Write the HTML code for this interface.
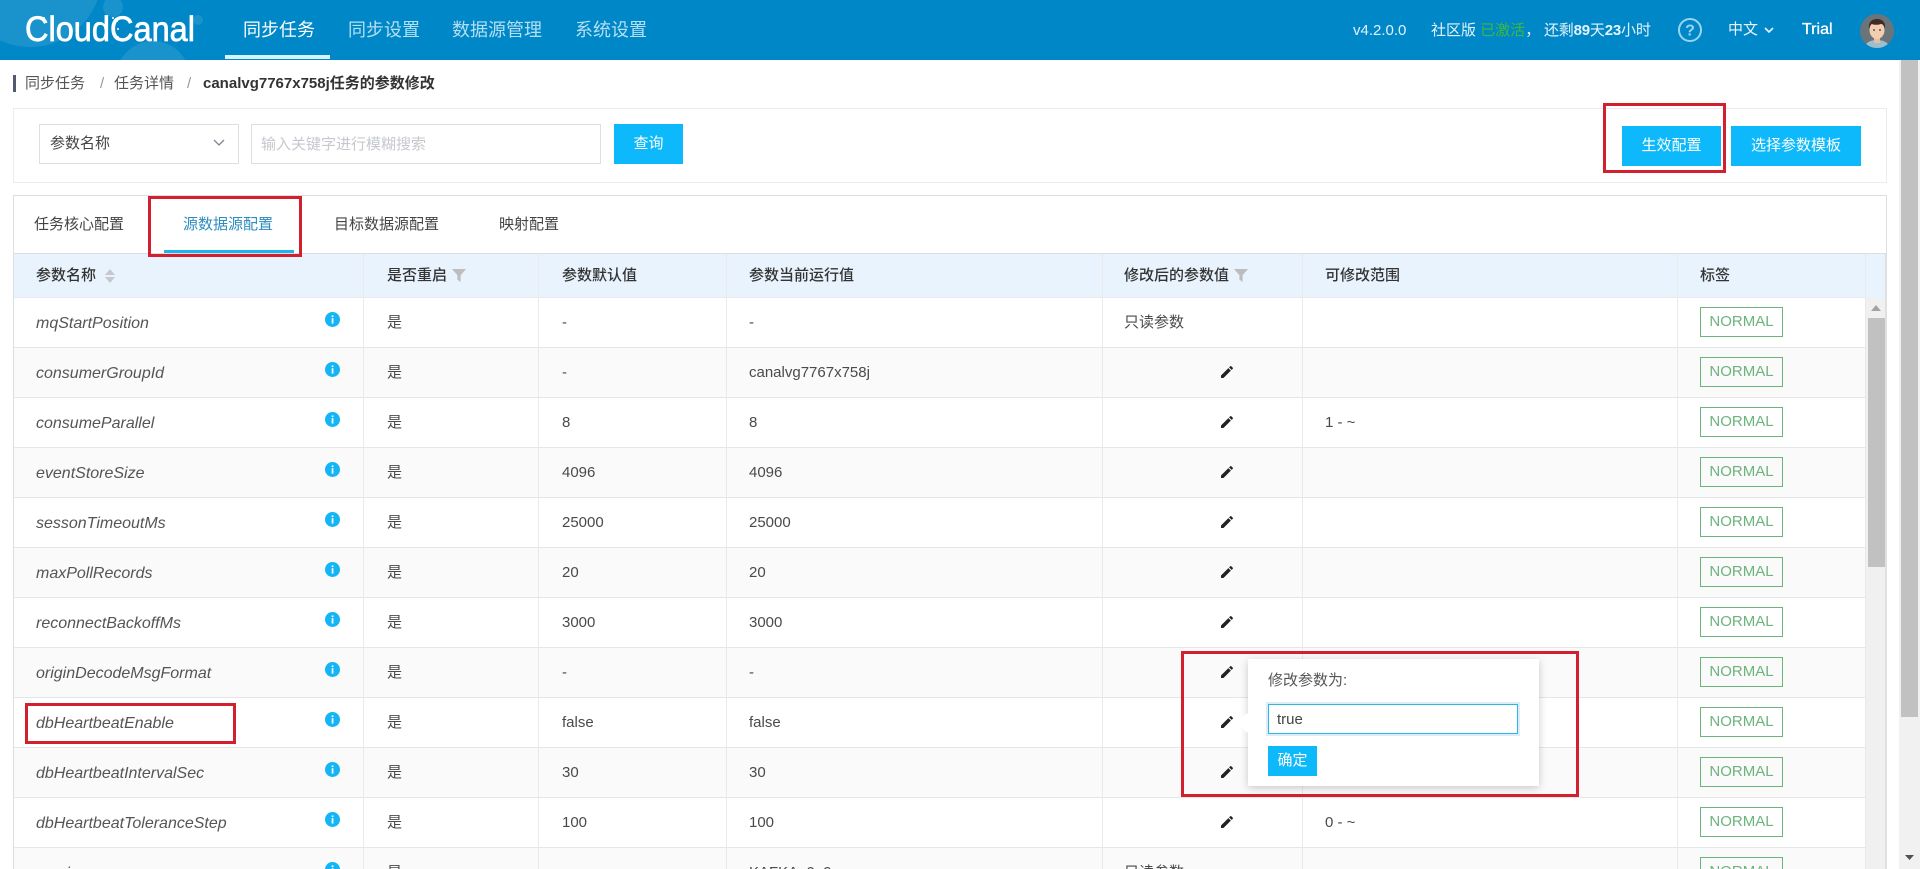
<!DOCTYPE html>
<html lang="zh">
<head>
<meta charset="utf-8">
<title>CloudCanal</title>
<style>
*{box-sizing:border-box}
html,body{margin:0;padding:0;width:1920px;height:869px;overflow:hidden;background:#fff}
body{position:relative;font:15px/1.2 "Liberation Sans","Noto Sans CJK SC",sans-serif;color:#444}
.a{position:absolute;white-space:nowrap}
#hd{position:absolute;left:0;top:0;width:1920px;height:60px;background:#0087c7;overflow:hidden;z-index:5}
.nav{position:absolute;top:18px;font-size:18px;line-height:24px;color:#b5dff3}
.btn{position:absolute;background:#0db9fb;color:#fff;text-align:center;font-size:15px}
.box{position:absolute;border:3px solid #d2202e;z-index:20;pointer-events:none}
#card{position:absolute;left:13px;top:195px;width:1874px;height:690px;border:1px solid #dcdee2;border-bottom:0;background:#fff}
table{position:absolute;left:14px;top:254px;border-collapse:separate;border-spacing:0;table-layout:fixed;width:1852px;z-index:2}
th{height:44px;background:#e8f3fd;border-right:1px solid #e8eaec;border-bottom:1px solid #e8eaec;font-weight:500;text-align:left;color:#333;padding:0 0 0 22px;font-size:15px;position:relative}
td{height:50px;border-right:1px solid #e8eaec;border-bottom:1px solid #e6e6e6;padding:0 0 0 22px;font-size:15px;color:#4a4a4a;position:relative;background:#fff}
td:last-child{padding-top:0;padding-bottom:1px}
tr:nth-child(even) td{background:#fafafa}
td.n{font-style:italic;font-size:16px;color:#555;padding-top:2px}
td.p{padding:0}
.i{position:absolute;left:311px;top:14px;width:15px;height:15px}
.pen{position:absolute;left:116px;top:16px;width:16px;height:16px}
.tag{display:block;width:83px;height:30px;border:1px solid #6cb37c;color:#6cb37c;text-align:center;line-height:28px;font-size:15px}
</style>
</head>
<body>
<svg width="0" height="0" style="position:absolute">
<symbol id="info" viewBox="0 0 15 15"><circle cx="7.5" cy="7.5" r="7.5" fill="#13b5f5"/><rect x="6.7" y="6.2" width="1.7" height="5.4" fill="#fff"/><rect x="6.7" y="3.4" width="1.7" height="1.7" fill="#fff"/></symbol>
<symbol id="pen" viewBox="0 0 24 24"><path fill="#222" d="M3 17.25V21h3.75L17.81 9.94l-3.75-3.75L3 17.25zM20.71 7.04c.39-.39.39-1.02 0-1.41l-2.34-2.34c-.39-.39-1.02-.39-1.41 0l-1.83 1.83 3.75 3.75 1.83-1.83z"/></symbol>
<symbol id="flt" viewBox="0 0 14 13"><path fill="#bdbdbd" d="M0 0h14L8.6 6.2V13L5.4 10.6V6.2z"/></symbol>
</svg>

<div id="hd">
  <svg class="a" style="left:0;top:0" width="240" height="60">
    <circle cx="30" cy="-25" r="72" fill="#1a93cd"/>
    <circle cx="113" cy="7" r="10" fill="#1a93cd"/>
    <circle cx="153" cy="78" r="37" fill="#1a93cd"/>
    <circle cx="198" cy="20" r="5" fill="#1a93cd"/>
    <text x="25" y="41" font-family="Liberation Sans" font-size="35" fill="#fff" stroke="#fff" stroke-width=".7" textLength="170" lengthAdjust="spacingAndGlyphs">CloudCanal</text>
    <g fill="#fff"><circle cx="113" cy="18" r="1"/><circle cx="117" cy="21" r="1"/><circle cx="114" cy="25" r="1"/><circle cx="118" cy="29" r="1"/><circle cx="114" cy="33" r="1"/><circle cx="118" cy="37" r="1"/><circle cx="44" cy="18" r="1"/><circle cx="42" cy="39" r="1"/></g>
  </svg>
  <div class="nav" style="left:243px;color:#fff">同步任务</div>
  <div class="a" style="left:225px;top:55px;width:105px;height:4px;background:#d8f4fb"></div>
  <div class="nav" style="left:348px">同步设置</div>
  <div class="nav" style="left:452px">数据源管理</div>
  <div class="nav" style="left:575px">系统设置</div>

  <div class="a" style="left:1353px;top:22px;color:#e3f3fb;line-height:18px">v4.2.0.0</div>
  <div class="a" style="left:1431px;top:22px;color:#e3f3fb;line-height:18px">社区版 <span style="color:#3cba3c">已激活</span>，</div>
  <div class="a" style="left:1544px;top:22px;color:#e3f3fb;line-height:18px;letter-spacing:-.2px">还剩<b>89</b>天<b>23</b>小时</div>
  <svg class="a" style="left:1678px;top:18px" width="24" height="24" viewBox="0 0 24 24"><circle cx="12" cy="12" r="11" fill="none" stroke="#9ad5f0" stroke-width="2"/><text x="12" y="17.5" text-anchor="middle" font-family="Liberation Sans" font-size="16" font-weight="bold" fill="#9ad5f0">?</text></svg>
  <div class="a" style="left:1728px;top:21px;color:#eaf6fc;line-height:18px">中文</div>
  <svg class="a" style="left:1764px;top:27px" width="10" height="7"><path d="M1 1l4 4 4-4" fill="none" stroke="#eaf6fc" stroke-width="1.6"/></svg>
  <div class="a" style="left:1802px;top:20px;color:#fff;font-size:16px;line-height:20px;-webkit-text-stroke:.3px #fff">Trial</div>
  <svg class="a" style="left:1860px;top:14px" width="34" height="34" viewBox="0 0 34 34">
    <defs><clipPath id="av"><circle cx="17" cy="17" r="17"/></clipPath></defs>
    <g clip-path="url(#av)"><rect width="34" height="34" fill="#6b7579"/>
    <ellipse cx="17" cy="33" rx="12" ry="7" fill="#9cbfd0"/>
    <rect x="14" y="22" width="6" height="7" fill="#e9bd9d"/>
    <ellipse cx="17" cy="16" rx="7.5" ry="9" fill="#f3cdb0"/>
    <path d="M9 15c-1-8 4-10 8-10s9 2 8 10c-1-3-2-5-4-5-3 1-7 1-9 0-2 1-2 3-3 5z" fill="#3e2c27"/>
    <circle cx="14" cy="16" r=".9" fill="#333"/><circle cx="20" cy="16" r=".9" fill="#333"/>
    </g>
  </svg>
</div>

<div class="a" style="left:13px;top:75px;width:3px;height:17px;background:#535a6f"></div>
<div class="a" style="left:25px;top:75px;line-height:18px;color:#555">同步任务</div>
<div class="a" style="left:100px;top:75px;line-height:18px;color:#999">/</div>
<div class="a" style="left:114px;top:75px;line-height:18px;color:#555">任务详情</div>
<div class="a" style="left:187px;top:75px;line-height:18px;color:#999">/</div>
<div class="a" style="left:203px;top:75px;line-height:18px;color:#333;font-weight:bold">canalvg7767x758j任务的参数修改</div>

<div class="a" style="left:13px;top:108px;width:1874px;height:75px;border:1px solid #ececec"></div>
<div class="a" style="left:39px;top:124px;width:200px;height:40px;border:1px solid #dcdee2;padding-left:10px;line-height:38px">参数名称</div>
<svg class="a" style="left:213px;top:139px" width="12" height="8"><path d="M1 1l5 5 5-5" fill="none" stroke="#80848f" stroke-width="1.3"/></svg>
<div class="a" style="left:251px;top:124px;width:350px;height:40px;border:1px solid #dcdee2;padding-left:9px;line-height:39px;color:#c5c8ce">输入关键字进行模糊搜索</div>
<div class="btn" style="left:614px;top:124px;width:69px;height:40px;line-height:40px">查询</div>
<div class="btn" style="left:1622px;top:126px;width:99px;height:40px;line-height:39px">生效配置</div>
<div class="btn" style="left:1731px;top:126px;width:130px;height:40px;line-height:39px">选择参数模板</div>

<div id="card"></div>
<div class="a" style="left:34px;top:216px;line-height:18px;color:#444">任务核心配置</div>
<div class="a" style="left:183px;top:216px;line-height:18px;color:#2d8cc0">源数据源配置</div>
<div class="a" style="left:164px;top:250px;width:130px;height:3px;background:#1db5ec;z-index:3"></div>
<div class="a" style="left:334px;top:216px;line-height:18px;color:#444">目标数据源配置</div>
<div class="a" style="left:499px;top:216px;line-height:18px;color:#444">映射配置</div>
<div class="a" style="left:14px;top:253px;width:1872px;height:1px;background:#dcdee2;z-index:3"></div>
<div class="a" style="left:1866px;top:254px;width:20px;height:44px;background:#e8f3fd"></div>

<table>
<colgroup><col style="width:350px"><col style="width:175px"><col style="width:188px"><col style="width:376px"><col style="width:200px"><col style="width:375px"><col style="width:188px"></colgroup>
<thead><tr>
<th>参数名称<svg style="position:absolute;left:90px;top:15px" width="12" height="14"><path d="M6 0l5 6H1zM6 14l5-6H1z" fill="#c5c8ce"/></svg></th>
<th style="padding-left:23px">是否重启<svg style="position:absolute;left:88px;top:15px" width="14" height="13"><use href="#flt"/></svg></th>
<th style="padding-left:23px">参数默认值</th>
<th>参数当前运行值</th>
<th style="padding-left:21px">修改后的参数值<svg style="position:absolute;left:131px;top:15px" width="14" height="13"><use href="#flt"/></svg></th>
<th>可修改范围</th>
<th>标签</th>
</tr></thead>
<tbody>
<tr><td class="n">mqStartPosition<svg class="i"><use href="#info"/></svg></td><td style="padding-left:23px">是</td><td style="padding-left:23px">-</td><td>-</td><td style="padding-left:21px">只读参数</td><td></td><td><span class="tag">NORMAL</span></td></tr>
<tr><td class="n">consumerGroupId<svg class="i"><use href="#info"/></svg></td><td style="padding-left:23px">是</td><td style="padding-left:23px">-</td><td>canalvg7767x758j</td><td class="p"><svg class="pen"><use href="#pen"/></svg></td><td></td><td><span class="tag">NORMAL</span></td></tr>
<tr><td class="n">consumeParallel<svg class="i"><use href="#info"/></svg></td><td style="padding-left:23px">是</td><td style="padding-left:23px">8</td><td>8</td><td class="p"><svg class="pen"><use href="#pen"/></svg></td><td>1 - ~</td><td><span class="tag">NORMAL</span></td></tr>
<tr><td class="n">eventStoreSize<svg class="i"><use href="#info"/></svg></td><td style="padding-left:23px">是</td><td style="padding-left:23px">4096</td><td>4096</td><td class="p"><svg class="pen"><use href="#pen"/></svg></td><td></td><td><span class="tag">NORMAL</span></td></tr>
<tr><td class="n">sessonTimeoutMs<svg class="i"><use href="#info"/></svg></td><td style="padding-left:23px">是</td><td style="padding-left:23px">25000</td><td>25000</td><td class="p"><svg class="pen"><use href="#pen"/></svg></td><td></td><td><span class="tag">NORMAL</span></td></tr>
<tr><td class="n">maxPollRecords<svg class="i"><use href="#info"/></svg></td><td style="padding-left:23px">是</td><td style="padding-left:23px">20</td><td>20</td><td class="p"><svg class="pen"><use href="#pen"/></svg></td><td></td><td><span class="tag">NORMAL</span></td></tr>
<tr><td class="n">reconnectBackoffMs<svg class="i"><use href="#info"/></svg></td><td style="padding-left:23px">是</td><td style="padding-left:23px">3000</td><td>3000</td><td class="p"><svg class="pen"><use href="#pen"/></svg></td><td></td><td><span class="tag">NORMAL</span></td></tr>
<tr><td class="n">originDecodeMsgFormat<svg class="i"><use href="#info"/></svg></td><td style="padding-left:23px">是</td><td style="padding-left:23px">-</td><td>-</td><td class="p"><svg class="pen"><use href="#pen"/></svg></td><td></td><td><span class="tag">NORMAL</span></td></tr>
<tr><td class="n">dbHeartbeatEnable<svg class="i"><use href="#info"/></svg></td><td style="padding-left:23px">是</td><td style="padding-left:23px">false</td><td>false</td><td class="p"><svg class="pen"><use href="#pen"/></svg></td><td></td><td><span class="tag">NORMAL</span></td></tr>
<tr><td class="n">dbHeartbeatIntervalSec<svg class="i"><use href="#info"/></svg></td><td style="padding-left:23px">是</td><td style="padding-left:23px">30</td><td>30</td><td class="p"><svg class="pen"><use href="#pen"/></svg></td><td></td><td><span class="tag">NORMAL</span></td></tr>
<tr><td class="n">dbHeartbeatToleranceStep<svg class="i"><use href="#info"/></svg></td><td style="padding-left:23px">是</td><td style="padding-left:23px">100</td><td>100</td><td class="p"><svg class="pen"><use href="#pen"/></svg></td><td>0 - ~</td><td><span class="tag">NORMAL</span></td></tr>
<tr><td class="n">version<svg class="i"><use href="#info"/></svg></td><td style="padding-left:23px">是</td><td style="padding-left:23px"></td><td>KAFKA_0_9</td><td style="padding-left:21px">只读参数</td><td></td><td><span class="tag">NORMAL</span></td></tr>
</tbody>
</table>

<div class="a" style="left:1866px;top:298px;width:19px;height:571px;background:#f0f0f0;z-index:3"></div>
<div class="a" style="left:1868px;top:318px;width:17px;height:249px;background:#c1c1c1;z-index:3"></div>
<svg class="a" style="left:1871px;top:305px;z-index:3" width="10" height="6"><path d="M5 0l5 6H0z" fill="#a3a3a3"/></svg>
<div class="a" style="left:1885px;top:254px;width:2px;height:615px;background:#dfe0e3;z-index:3"></div>

<div class="a" style="left:1899px;top:60px;width:21px;height:809px;background:#f1f1f1"></div>
<div class="a" style="left:1901px;top:60px;width:17px;height:657px;background:#c1c1c1"></div>
<svg class="a" style="left:1905px;top:855px" width="9" height="5"><path d="M0 0h9L4.5 5z" fill="#505050"/></svg>

<div class="a" style="left:1248px;top:659px;width:291px;height:127px;background:#fff;box-shadow:0 2px 8px rgba(0,0,0,.2);z-index:10">
  <div class="a" style="left:20px;top:13px;line-height:18px;color:#555">修改参数为:</div>
  <div class="a" style="left:20px;top:45px;width:250px;height:30px;border:1px solid #2db7e8;box-shadow:0 0 0 2px #dcedf8;padding-left:8px;line-height:29px;font-size:15px;color:#444">true</div>
  <div class="btn" style="left:20px;top:87px;width:49px;height:30px;line-height:30px">确定</div>
</div>
<div class="a" style="left:1240px;top:716px;width:14px;height:14px;background:#fff;transform:rotate(45deg);z-index:11"></div>

<div class="box" style="left:1603px;top:103px;width:123px;height:70px"></div>
<div class="box" style="left:148px;top:196px;width:154px;height:61px"></div>
<div class="box" style="left:25px;top:703px;width:211px;height:41px"></div>
<div class="box" style="left:1181px;top:651px;width:398px;height:146px"></div>
</body>
</html>
